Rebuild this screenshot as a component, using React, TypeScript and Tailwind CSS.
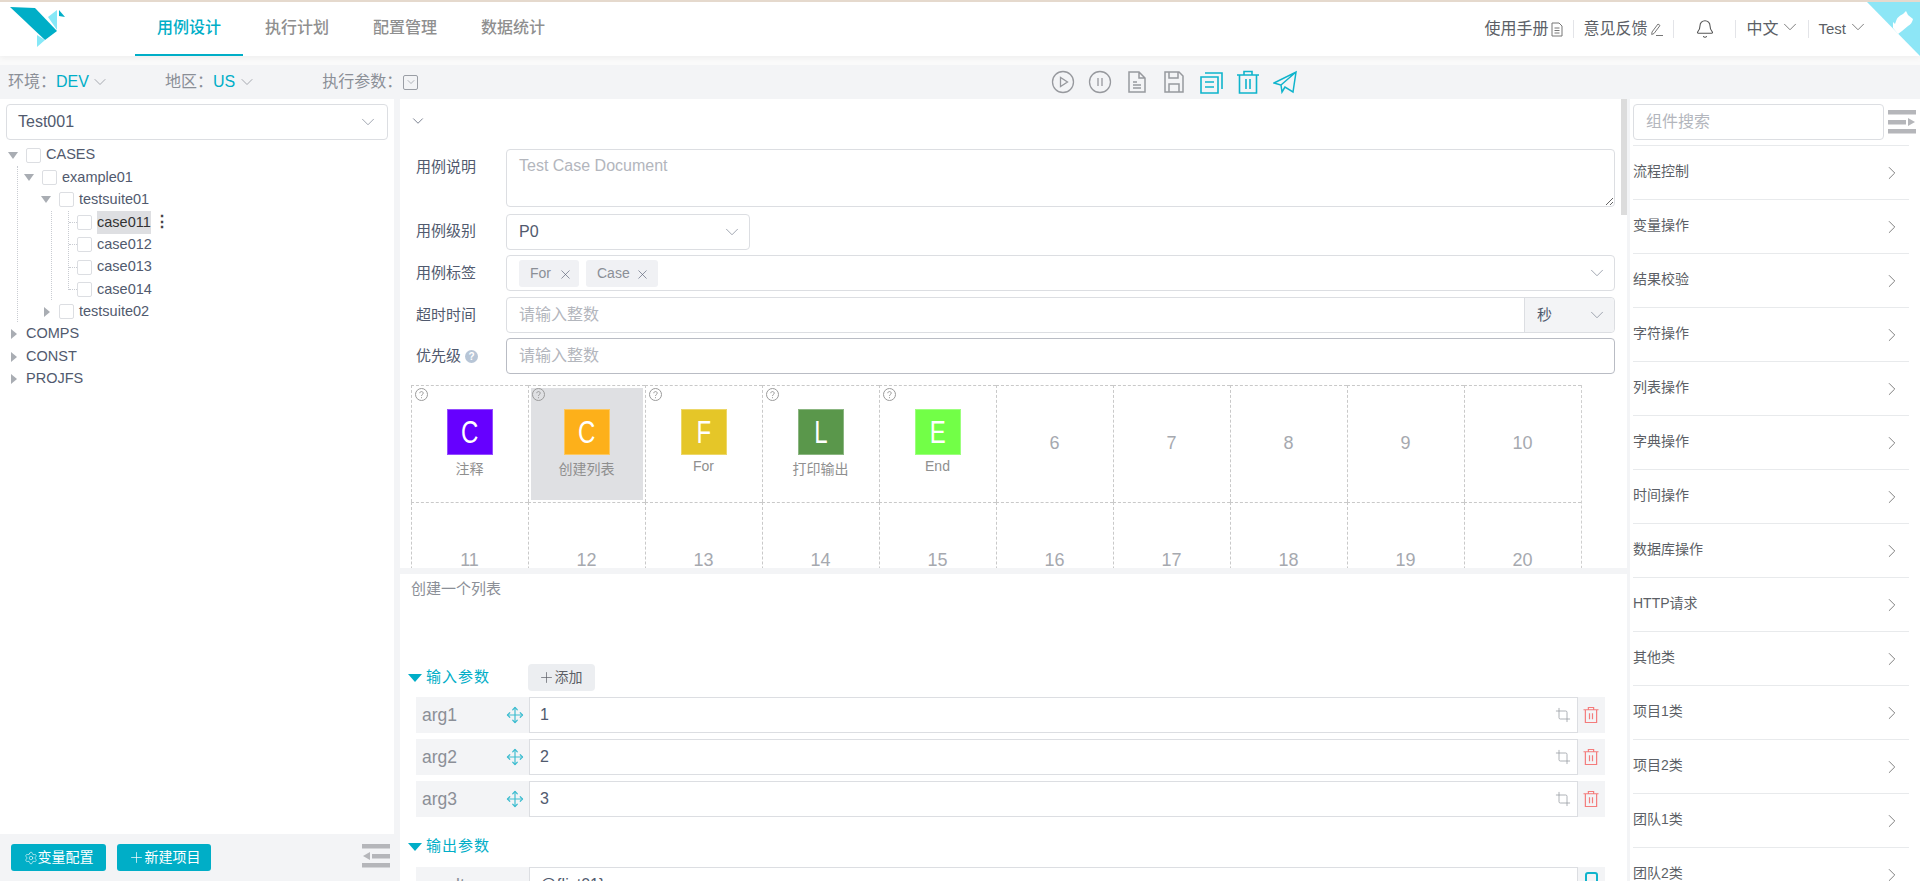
import { Bell, ChevronDown, ChevronRight, Crop, Move, Plus, Settings, X } from 'lucide-react';

const NAV = ['用例设计', '执行计划', '配置管理', '数据统计'];

const TREE = [
  { name: 'CASES', level: 0, arrow: 'down', check: true },
  { name: 'example01', level: 1, arrow: 'down', check: true },
  { name: 'testsuite01', level: 2, arrow: 'down', check: true },
  { name: 'case011', level: 3, arrow: '', check: true, active: true },
  { name: 'case012', level: 3, arrow: '', check: true },
  { name: 'case013', level: 3, arrow: '', check: true },
  { name: 'case014', level: 3, arrow: '', check: true },
  { name: 'testsuite02', level: 2, arrow: 'right', check: true },
  { name: 'COMPS', level: 0, arrow: 'right', check: false },
  { name: 'CONST', level: 0, arrow: 'right', check: false },
  { name: 'PROJFS', level: 0, arrow: 'right', check: false },
];

const STEPS: Record<number, { letter: string; label: string; color: string; labelTop: string }> = {
  1: { letter: 'C', label: '注释', color: 'bg-[#6600ff]', labelTop: 'mt-[4px]' },
  2: { letter: 'C', label: '创建列表', color: 'bg-[#fdb01a]', labelTop: 'mt-[4px]' },
  3: { letter: 'F', label: 'For', color: 'bg-[#e5c628]', labelTop: 'mt-[1px]' },
  4: { letter: 'L', label: '打印输出', color: 'bg-[#5a974b]', labelTop: 'mt-[4px]' },
  5: { letter: 'E', label: 'End', color: 'bg-[#72ff47]', labelTop: 'mt-[1px]' },
};

const GROUPS = ['流程控制', '变量操作', '结果校验', '字符操作', '列表操作', '字典操作', '时间操作', '数据库操作', 'HTTP请求', '其他类', '项目1类', '项目2类', '团队1类', '团队2类'];

const Logo = () => (
  <svg width="60" height="44" viewBox="0 0 60 44" className="shrink-0">
    <polygon points="0,0 25,1 47,24 35,33" fill="#00aec7" />
    <polygon points="38,10 47,3 47,23" fill="#86e8f7" />
    <polygon points="27,28 35,33 27,40" fill="#86e8f7" />
    <polygon points="49,3 55,10 49,9" fill="#00aec7" />
  </svg>
);

const DownTriangle = ({ className }: { className: string }) => (
  <svg width="10" height="7" viewBox="0 0 10 7" preserveAspectRatio="none" className={className}><polygon points="0,0 10,0 5,7" fill="currentColor" /></svg>
);

const RightTriangle = () => (
  <svg width="6" height="10" viewBox="0 0 6 10" className="text-[#a9adb3]"><polygon points="0,0 6,5 0,10" fill="currentColor" /></svg>
);

const HelpMark = () => (
  <svg width="13" height="13" viewBox="0 0 13 13" fill="none" stroke="#9a9a9a" strokeWidth="1">
    <circle cx="6.5" cy="6.5" r="6" />
    <path d="M4.800 5.200c0-2.200 3.400-2.200 3.400 0 0 1.300-1.700 1.300-1.700 2.800M6.500 9.200v1" />
  </svg>
);

const ToolIcon = ({ children, color }: { children: React.ReactNode; color: string }) => (
  <div className="w-[37px] flex justify-center">
    <svg width="24" height="24" viewBox="0 0 24 24" fill="none" stroke={color} strokeWidth="1.300">{children}</svg>
  </div>
);

const Trash = ({ color, size }: { color: string; size: number }) => (
  <svg width={size} height={size} viewBox="0 0 24 24" fill="none" stroke={color} strokeWidth="1.600">
    <path d="M2 5h20M8.500 5V2h7v3M4.500 5v17h15V5M10 9.500v8M14 9.500v8" />
  </svg>
);

const ParamRow = ({ name, value }: { name: string; value: string }) => (
  <div className="flex h-[36px] ml-[16px] mt-[6px] shrink-0">
    <div className="w-[113px] bg-[#f3f4f6] flex items-center justify-between pl-[6px] pr-[5px] text-[17.5px] text-[#8b8f97]">
      <span>{name}</span>
      <Move size={18} strokeWidth={1.600} className="text-[#3fbdd0]" />
    </div>
    <div className="w-[1049px] border border-[#dcdee2] flex items-center justify-between pl-[10px] pr-[6px] text-[16px] text-[#515a6e]">
      <span>{value}</span>
      <Crop size={16} strokeWidth={1.200} className="text-[#9a9ea5]" />
    </div>
    <div className="w-[27px] bg-[#f3f4f6] flex justify-center items-center pr-[1px]">
      <Trash color="#f47c7c" size={18} />
    </div>
  </div>
);

const SectionTitle = ({ title, children }: { title: string; children?: React.ReactNode }) => (
  <div className="flex items-center h-[27px] shrink-0 pl-[8px]">
    <DownTriangle className="w-[14px] h-[8px] text-[#00aec7]" />
    <span className="ml-[4px] text-[15px] tracking-[1px] text-[#00aec7] w-[102px]">{title}</span>
    {children}
  </div>
);

const App = () => {
  return (
    <div className="h-screen w-full overflow-hidden flex flex-col bg-[#f3f4f6] text-[#515a6e] text-[15px] [font-family:'Liberation_Sans','Noto_Sans_CJK_SC',sans-serif]">
      {/* Header */}
      <div className="h-[56px] shrink-0 bg-white border-t-2 border-[#e5d9cd] shadow-[0_2px_6px_rgba(0,0,0,0.05)] flex relative">
        <div className="w-[135px] pl-[10px] pt-[5px]"><Logo /></div>
        {NAV.map((item, i) => (
          <div
            key={item}
            className={`w-[108px] flex items-center justify-center text-[16px] font-medium border-b-2 ${i === 0 ? 'text-[#00aec7] border-[#00aec7]' : 'text-[#8f8f8f] border-transparent'}`}
          >
            {item}
          </div>
        ))}
        <div className="ml-auto flex items-center pr-[51px] text-[16px] text-[#5c5f66]">
          <span>使用手册</span>
          <svg width="14" height="15" viewBox="0 0 14 15" fill="none" stroke="#777" className="ml-[2px]"><path d="M2 1h7l3 3v10H2zM4.500 6h5M4.500 8.500h5M4.500 11h5" /></svg>
          <div className="w-px h-[18px] bg-[#e3e4e8] mx-[9px]" />
          <span>意见反馈</span>
          <svg width="15" height="15" viewBox="0 0 15 15" fill="none" stroke="#777" className="ml-[2px]"><path d="M3 10l6-8 2 1.500-6 8-2.300 1zM7 13.500h7" /></svg>
          <div className="w-px h-[18px] bg-[#e3e4e8] ml-[9px]" />
          <div className="w-[61px] flex justify-center"><Bell size={20} strokeWidth={1.300} className="text-[#555]" /></div>
          <div className="w-px h-[18px] bg-[#e3e4e8]" />
          <span className="ml-[10px]">中文</span>
          <ChevronDown size={22} strokeWidth={0.900} className="ml-[1px] mb-[4px] text-[#666]" />
          <div className="w-px h-[18px] bg-[#e3e4e8] ml-[7px]" />
          <span className="ml-[9px] text-[15px]">Test</span>
          <ChevronDown size={22} strokeWidth={0.900} className="ml-[1px] mb-[4px] text-[#666]" />
        </div>
        {/* corner ribbon */}
        <svg width="53" height="54" viewBox="0 0 53 54" className="absolute right-0 top-0">
          <polygon points="0,0 53,0 53,54" fill="#8de6f6" />
          <path d="M26 26L26 20L28 22Q30 14 36 12L39 9L41 13L46 17Q45 22 41 24L35 29L31 32z" fill="#fff" />
        </svg>
      </div>
      <div className="h-[9px] shrink-0 bg-[#fafafa]" />

      {/* Toolbar */}
      <div className="h-[34px] shrink-0 flex items-center text-[16px] text-[#8b8f97]">
        <div className="w-[1044px] flex items-center pl-[8px]">
          <span className="w-[48px]">环境：</span>
          <span className="text-[#00aec7]">DEV</span>
          <ChevronDown size={20} strokeWidth={0.900} className="ml-[1px] text-[#8b8f97]" />
          <span className="ml-[55px] w-[48px]">地区：</span>
          <span className="text-[#00aec7]">US</span>
          <ChevronDown size={20} strokeWidth={0.900} className="ml-[2px] text-[#8b8f97]" />
          <span className="ml-[65px]">执行参数：</span>
          <div className="w-[15px] h-[15px] border border-[#9a9ea5] rounded-[2px] flex items-center justify-center ml-[1px]">
            <ChevronDown size={12} strokeWidth={1.300} className="text-[#8b8f97]" />
          </div>
        </div>
        <ToolIcon color="#97999e"><circle cx="12" cy="12" r="10.500" /><path d="M9.500 7.500v9l7-4.500z" /></ToolIcon>
        <ToolIcon color="#97999e"><circle cx="12" cy="12" r="10.500" /><path d="M10 8v8M14 8v8" /></ToolIcon>
        <ToolIcon color="#97999e"><path d="M4 2h10l6 6v14H4zM14 2v6h6M8 12h4M8 15h8M8 18h8" strokeWidth="1.500" /></ToolIcon>
        <ToolIcon color="#97999e"><path d="M3 2h14l4 4v16H3zM7 2v6h9V2M7 22v-8h10v8" strokeWidth="1.500" /></ToolIcon>
        <ToolIcon color="#0fb4cc"><path d="M2 7h17v16H2zM6 3h17v16M6 12h9M6 17h9" strokeWidth="1.600" /></ToolIcon>
        <ToolIcon color="#0fb4cc"><path d="M1 5h22M8 5V1.500h8V5M3.500 5v18h17V5M10 9v10M14 9v10" strokeWidth="1.600" /></ToolIcon>
        <ToolIcon color="#0fb4cc"><path d="M1 13L23 2l-3 20-8-5-3 5-1-7zM23 2L8 15M12 17l-3 5" strokeWidth="1.500" /></ToolIcon>
      </div>

      {/* Body */}
      <div className="flex-1 flex min-h-0">
        {/* Project tree */}
        <div className="w-[394px] shrink-0 flex flex-col">
          <div className="flex-1 bg-white pt-[5px] px-[6px] min-h-0">
            <div className="h-[36px] w-[382px] border border-[#dcdee2] rounded-[4px] flex items-center justify-between pl-[11px] pr-[8px]">
              <span className="text-[16px]">Test001</span>
              <ChevronDown size={22} strokeWidth={0.800} className="text-[#808695]" />
            </div>
            <div className="relative mt-[4px] -ml-[6px] text-[14.500px]">
              <div className="absolute left-[17px] top-[22px] h-[156px] border-l border-dotted border-[#c9ccd2]" />
              <div className="absolute left-[51px] top-[67px] h-[89px] border-l border-dotted border-[#c9ccd2]" />
              <div className="absolute left-[68px] top-[67px] h-[79px] border-l border-dotted border-[#c9ccd2]" />
              {TREE.map((node) => (
                <div
                  key={node.name}
                  className={`flex items-center h-[22.4px] ${node.level === 0 ? 'pl-[8px]' : node.level === 1 ? 'pl-[24px]' : node.level === 2 ? 'pl-[41px]' : 'pl-[77px]'}`}
                >
                  {node.level === 3 && <div className="-ml-[8px] w-[8px] border-t border-dotted border-[#c9ccd2] shrink-0" />}
                  {node.arrow === 'down' && <div className="w-[18px]"><DownTriangle className="text-[#a9adb3]" /></div>}
                  {node.arrow === 'right' && <div className="w-[18px] pl-[3px]"><RightTriangle /></div>}
                  {node.check && <div className="w-[15px] h-[15px] bg-white border border-[#dcdee2] rounded-[2px] mr-[5px] shrink-0" />}
                  <span className={node.active ? 'bg-[#dedfe2] text-[#333] h-[23px] leading-[23px]' : ''}>{node.name}</span>
                  {node.active && <span className="ml-[3px] text-[16px] text-[#444] font-bold leading-none">⋮</span>}
                </div>
              ))}
            </div>
          </div>
          <div className="h-[47px] shrink-0 flex items-center pl-[11px] pr-[4px]">
            <div className="w-[95px] h-[27px] rounded-[3px] bg-[#00aec7] text-white flex items-center justify-center text-[14px]">
              <Settings size={14} strokeWidth={1} />
              <span>变量配置</span>
            </div>
            <div className="w-[94px] h-[27px] rounded-[3px] bg-[#00aec7] text-white flex items-center justify-center text-[14px] ml-[11px]">
              <Plus size={17} strokeWidth={1} />
              <span>新建项目</span>
            </div>
            <svg width="28" height="24" viewBox="0 0 28 24" className="ml-auto mb-[3px]" fill="#b5b6ba">
              <rect x="0" y="0" width="28" height="4.500" />
              <rect x="10" y="10" width="18" height="4.500" />
              <polygon points="1,12 8,8 8,16" />
              <rect x="0" y="19" width="28" height="4.500" />
            </svg>
          </div>
        </div>

        {/* Case editor */}
        <div className="w-[1227px] ml-[6px] shrink-0 flex flex-col min-h-0">
          <div className="relative h-[469px] shrink-0 bg-white overflow-hidden">
            <div className="absolute right-0 top-0 w-[6px] h-[116px] bg-[#dcdcdc]" />
            <div className="h-[50px] pl-[9px] pt-[13px]">
              <ChevronDown size={18} strokeWidth={1} className="text-[#515a6e]" />
            </div>
            <div className="flex">
              <label className="w-[106px] pl-[16px] pt-[7px]">用例说明</label>
              <textarea placeholder="Test Case Document" className="w-[1109px] h-[58px] border border-[#dcdee2] rounded-[4px] px-[12px] py-[4px] text-[16px] placeholder:text-[#b3b6bd]" />
            </div>
            <div className="flex items-center mt-[7px]">
              <label className="w-[106px] pl-[16px] pb-[2px]">用例级别</label>
              <div className="w-[244px] h-[36px] border border-[#dcdee2] rounded-[4px] flex items-center justify-between pl-[12px] pr-[6px] text-[16px]">
                <span>P0</span>
                <ChevronDown size={22} strokeWidth={0.800} className="text-[#808695]" />
              </div>
            </div>
            <div className="flex items-center mt-[5px]">
              <label className="w-[106px] pl-[16px]">用例标签</label>
              <div className="w-[1109px] h-[36px] border border-[#dcdee2] rounded-[4px] flex items-center pl-[12px] pr-[6px] gap-[7px]">
                <div className="h-[27px] w-[60px] rounded-[3px] bg-[#f0f1f4] flex items-center pl-[11px] text-[14px] text-[#8b8f97]">For<X size={15} strokeWidth={1} className="ml-[7px] mt-[2px] text-[#515a6e]" /></div>
                <div className="h-[27px] w-[72px] rounded-[3px] bg-[#f0f1f4] flex items-center pl-[11px] text-[14px] text-[#8b8f97]">Case<X size={15} strokeWidth={1} className="ml-[5px] mt-[2px] text-[#515a6e]" /></div>
                <ChevronDown size={22} strokeWidth={0.800} className="ml-auto text-[#808695]" />
              </div>
            </div>
            <div className="flex items-center mt-[6px]">
              <label className="w-[106px] pl-[16px]">超时时间</label>
              <div className="w-[1109px] h-[36px] border border-[#dcdee2] rounded-[4px] flex">
                <input placeholder="请输入整数" className="flex-1 px-[12px] text-[16px] outline-none placeholder:text-[#b3b6bd]" />
                <div className="w-[90px] bg-[#f3f4f6] border-l border-[#dcdee2] rounded-r-[4px] flex items-center justify-between pl-[12px] pr-[6px]">
                  <span>秒</span>
                  <ChevronDown size={22} strokeWidth={0.800} className="text-[#808695]" />
                </div>
              </div>
            </div>
            <div className="flex items-center mt-[5px]">
              <label className="w-[106px] pl-[16px] flex items-center gap-[4px]">
                优先级
                <span className="w-[13px] h-[13px] rounded-full bg-[#b7c5d6] text-white text-[10px] font-bold flex items-center justify-center">?</span>
              </label>
              <input placeholder="请输入整数" className="w-[1109px] h-[36px] border border-[#b9bcc4] rounded-[4px] px-[12px] text-[16px] placeholder:text-[#b3b6bd]" />
            </div>
            {/* Step grid */}
            <div className="grid grid-cols-[repeat(10,117px)] ml-[11px] mt-[11px] w-[1171px] border-r border-dashed border-[#cfcfcf]">
              {Array.from({ length: 20 }, (_, i) => i + 1).map((n) => {
                const step = STEPS[n];
                return (
                  <div key={n} className="relative h-[117px] border-l border-t border-dashed border-[#c9c9c9]">
                    {step ? (
                      <div className={`absolute inset-[2px] flex flex-col items-center pt-[21px] pr-[1px] ${n === 2 ? 'bg-[#dfe0e3]' : ''}`}>
                        <div className="absolute left-[1px] top-0"><HelpMark /></div>
                        <div className={`w-[46px] h-[46px] shrink-0 flex items-center justify-center border border-white/30 text-white text-[32px] ${step.color}`}>
                          <span className="inline-block scale-x-[0.75]">{step.letter}</span>
                        </div>
                        <span className={`text-[14px] text-[#8f8f8f] ${step.labelTop}`}>{step.label}</span>
                      </div>
                    ) : (
                      <div className="h-full flex items-center justify-center pb-[2px] pr-[1px] text-[18px] text-[#a6a9af]">{n}</div>
                    )}
                  </div>
                );
              })}
            </div>
          </div>

          {/* Splitter */}
          <div className="h-[6px] shrink-0" />

          {/* Step params */}
          <div className="flex-1 min-h-0 bg-white overflow-hidden flex flex-col">
            <div className="h-[90px] shrink-0 pl-[11px] pt-[4px] text-[15px] text-[#8b8f97]">创建一个列表</div>
            <SectionTitle title="输入参数">
              <div className="w-[67px] h-[27px] rounded-[4px] bg-[#eceef1] flex items-center justify-center pr-[3px] text-[14px] text-[#5c5f66]">
                <Plus size={17} strokeWidth={1} />添加
              </div>
            </SectionTitle>
            <ParamRow name="arg1" value="1" />
            <ParamRow name="arg2" value="2" />
            <ParamRow name="arg3" value="3" />
            <div className="mt-[16px]"><SectionTitle title="输出参数" /></div>
            <div className="flex h-[36px] ml-[16px] mt-[7px] shrink-0">
              <div className="w-[113px] bg-[#f3f4f6] flex items-center pl-[6px] text-[17.5px] text-[#8b8f97]">result</div>
              <div className="w-[1049px] border border-[#dcdee2] flex items-center pl-[10px] text-[16px]">@{'{list01}'}</div>
              <div className="w-[27px] bg-[#f3f4f6] flex justify-center items-center pb-[6px]">
                <div className="w-[13px] h-[20px] border-2 border-[#0fb4cc] rounded-[3px]" />
              </div>
            </div>
          </div>
        </div>

        {/* Component groups */}
        <div className="ml-[3px] flex-1 bg-white flex flex-col min-w-0 overflow-hidden pt-[5px] pl-[3px]">
          <div className="flex items-center shrink-0">
            <input placeholder="组件搜索" className="w-[251px] h-[36px] border border-[#dcdee2] rounded-[4px] px-[12px] text-[16px] placeholder:text-[#b3b6bd]" />
            <svg width="28" height="24" viewBox="0 0 28 24" className="ml-[4px]" fill="#b5b6ba">
              <rect x="0" y="0" width="28" height="4.500" />
              <rect x="0" y="10" width="18" height="4.500" />
              <polygon points="27,12 20,8 20,16" />
              <rect x="0" y="19" width="28" height="4.500" />
            </svg>
          </div>
          <div className="w-[276px] mt-[5px] shrink-0">
            {GROUPS.map((g) => (
              <div key={g} className="h-[54px] border-t border-[#e8eaec] flex items-center justify-between pr-[6px] text-[14px] text-[#5c5f66]">
                <span className="pb-[2px]">{g}</span>
                <ChevronRight size={22} strokeWidth={0.900} className="text-[#666]" />
              </div>
            ))}
          </div>
        </div>
      </div>
    </div>
  );
};

export default App;
